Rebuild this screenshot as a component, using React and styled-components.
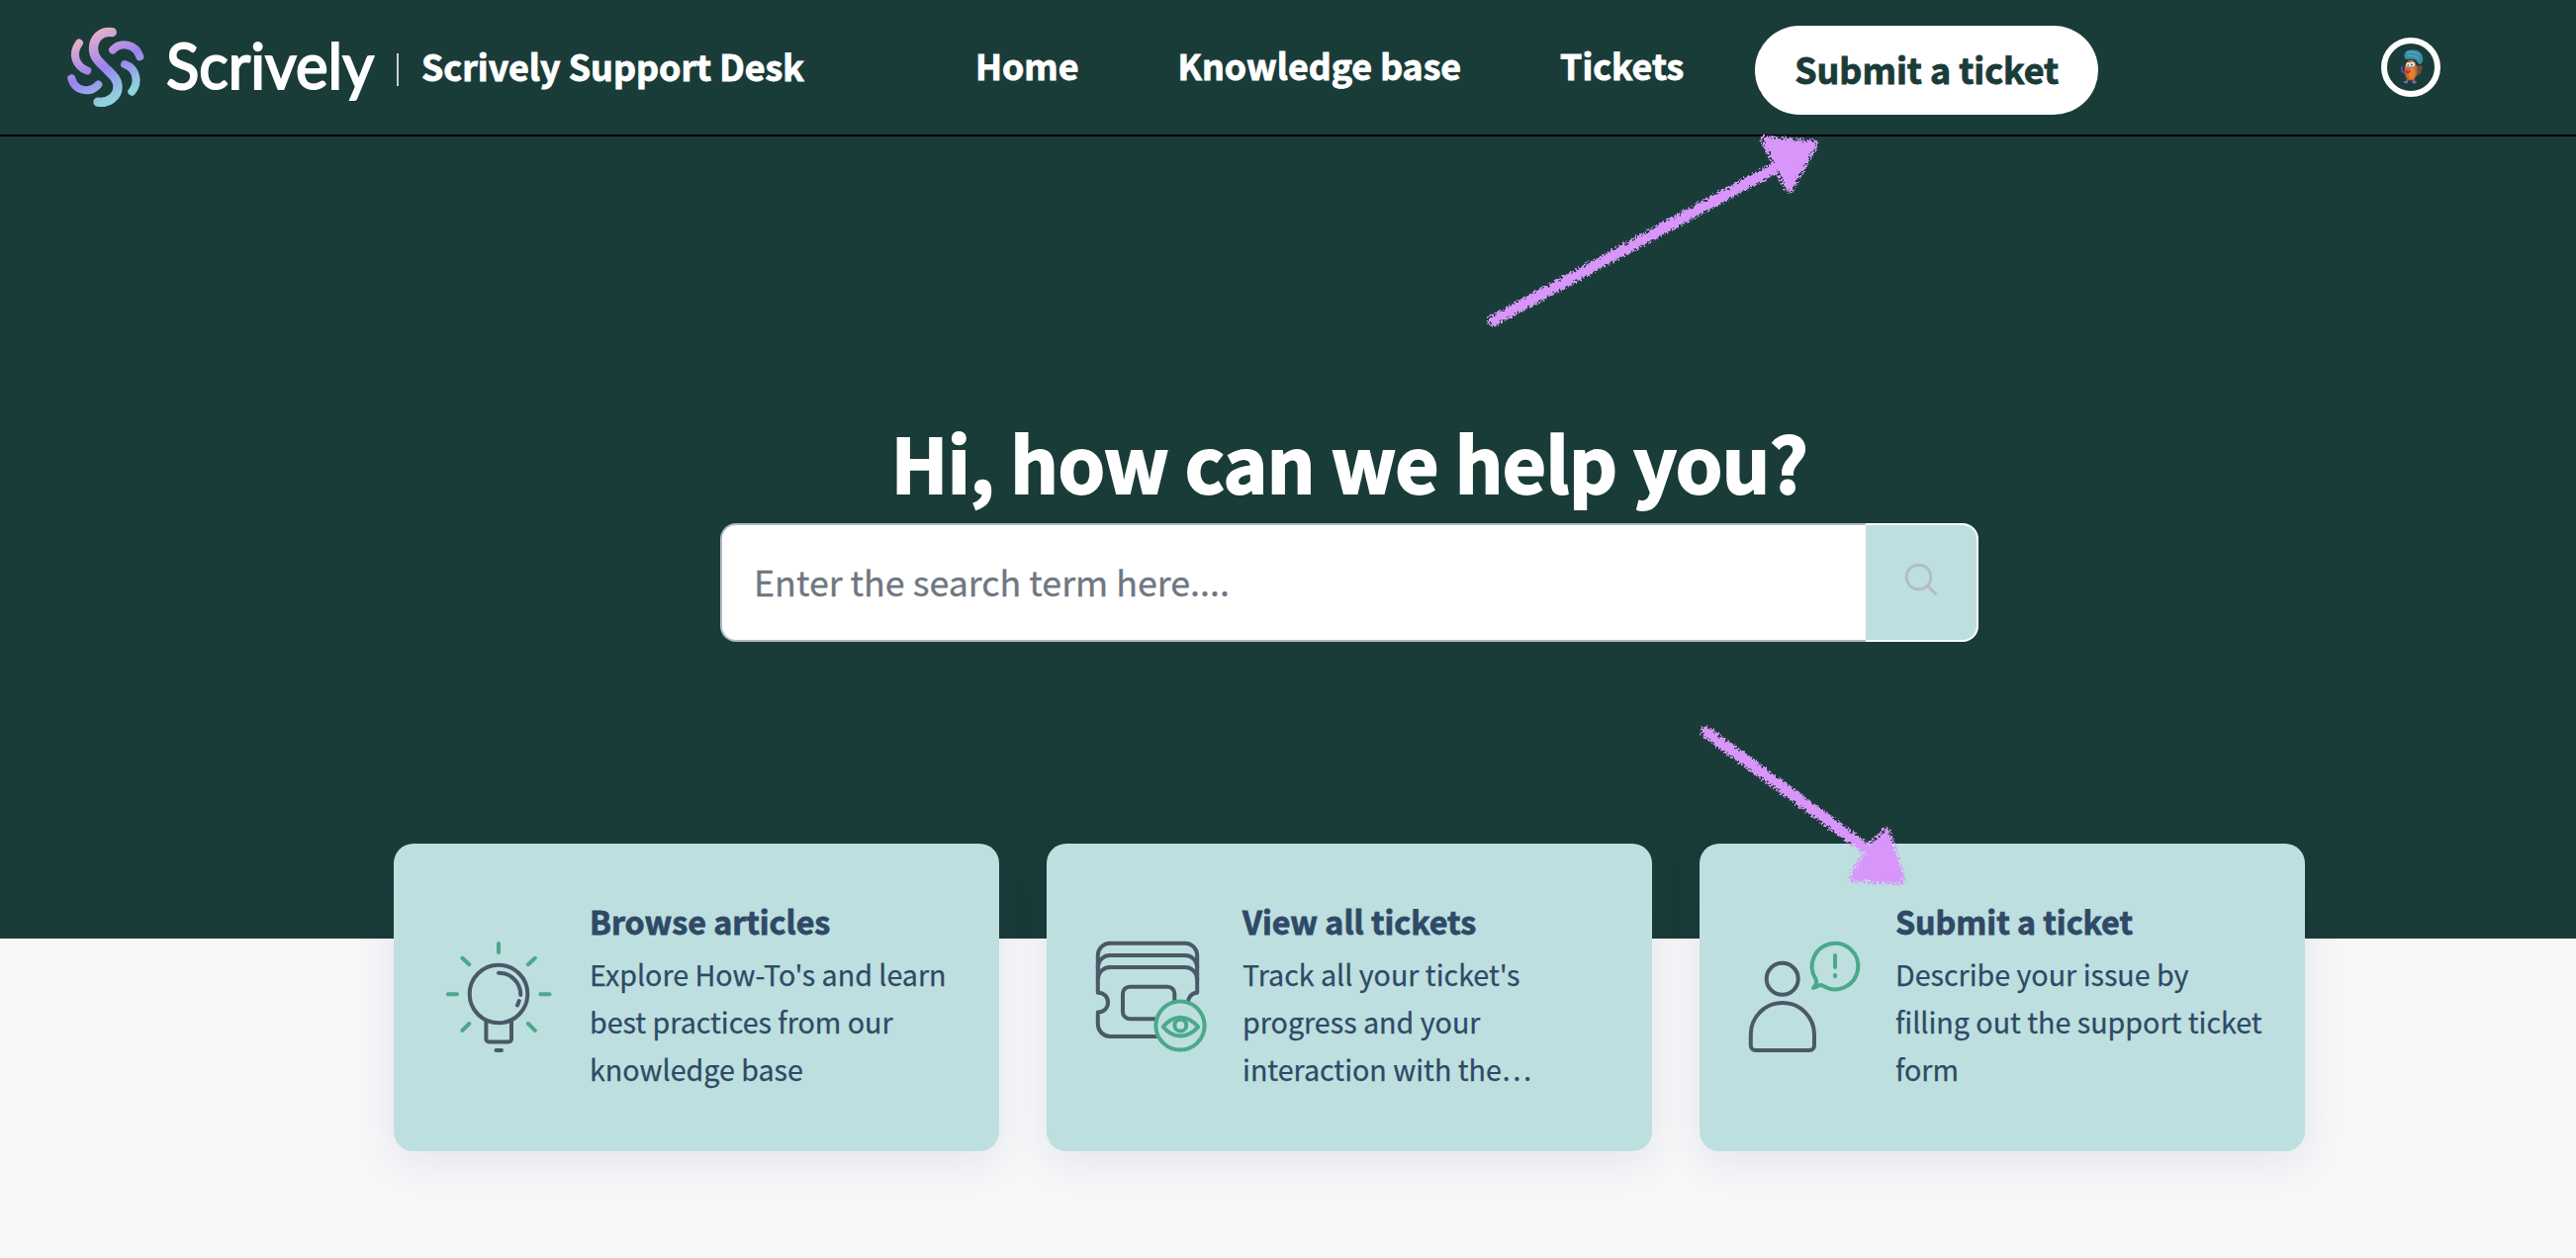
import React from "react";
import styled, { createGlobalStyle } from "styled-components";

const GlobalStyle = createGlobalStyle`
  * {
    box-sizing: border-box;
  }

  body {
    margin: 0;
    background-color: #f6f7f9;
    font-family: "Noto Sans CJK SC", "Open Sans", sans-serif;
  }
`;

const Page = styled.div`
  position: relative;
  min-height: 1272px;
  overflow: hidden;
`;

const Header = styled.header`
  display: flex;
  align-items: center;
  height: 138px;
  padding: 0 137px 0 68px;
  background-color: #1a3c39;
  border-bottom: 2px solid black;
`;

const Brand = styled.div`
  display: flex;
  align-items: center;
  flex: 0 0 918px;
`;

const Divider = styled.span`
  width: 2px;
  height: 33px;
  margin: 4px 0 0 21px;
  background-color: #cfcfcf;
`;

const PortalName = styled.span`
  margin: -4px 0 0 23px;
  font-size: 35.8px;
  font-weight: 700;
  line-height: 52px;
  white-space: nowrap;
  color: white;
  -webkit-text-stroke: 0.9px white;
`;

const Nav = styled.nav`
  display: flex;
  align-items: center;
  gap: 100px;
`;

const NavLink = styled.a`
  margin-top: -4px;
  font-size: 35.7px;
  font-weight: 700;
  line-height: 52px;
  white-space: nowrap;
  color: white;
  -webkit-text-stroke: 0.9px white;
`;

const TicketButton = styled.button`
  width: 347px;
  height: 90px;
  margin: 6px 0 0 72px;
  padding: 0 0 4px;
  border: none;
  border-radius: 45px;
  font-family: inherit;
  font-size: 35.8px;
  font-weight: 700;
  white-space: nowrap;
  color: #1a3c39;
  background-color: white;
  -webkit-text-stroke: 0.9px #1a3c39;
`;

const Avatar = styled.div`
  display: flex;
  width: 60px;
  height: 60px;
  margin-left: auto;
  border: 6px solid white;
  border-radius: 50%;
`;

const Hero = styled.section`
  display: flex;
  flex-direction: column;
  align-items: center;
  height: 811px;
  padding: 278px 0 0 124px;
  background-color: #1a3c39;
`;

const Title = styled.h1`
  margin: 0 0 13px;
  font-size: 76px;
  font-weight: 700;
  line-height: 100px;
  letter-spacing: -0.5px;
  white-space: nowrap;
  color: white;
  -webkit-text-stroke: 2px white;
`;

const SearchBar = styled.form`
  display: flex;
  width: 1272px;
  height: 120px;
`;

const SearchInput = styled.input`
  flex: 1;
  padding: 0 32px 5px;
  border: 2px solid #afbcc5;
  border-right: none;
  border-radius: 16px 0 0 16px;
  font-family: inherit;
  font-size: 35.8px;
  color: #264966;
  background-color: white;

  &::placeholder {
    color: #6f7780;
    opacity: 1;
    -webkit-text-stroke: 0.3px #6f7780;
  }
`;

const SearchButton = styled.button`
  display: flex;
  align-items: center;
  justify-content: center;
  width: 114px;
  padding: 0 0 6px;
  border: 2px solid white;
  border-left: none;
  border-radius: 0 16px 16px 0;
  background-color: #bddfdf;
`;

const Cards = styled.section`
  display: flex;
  justify-content: center;
  gap: 48px;
  margin-top: -96px;
  padding-left: 124px;
`;

const Card = styled.a`
  display: flex;
  align-items: center;
  width: 612px;
  height: 311px;
  padding: 0 36px 0 46px;
  border-radius: 20px;
  background-color: #bddfdf;
  box-shadow: 0 10px 40px rgba(24, 30, 51, 0.08);
`;

const CardText = styled.div`
  width: 376px;
  margin-left: 32px;
  padding-bottom: 6px;
  color: #2f4966;
`;

const CardTitle = styled.h2`
  margin: 0 0 6px;
  font-size: 32.2px;
  font-weight: 700;
  line-height: 48px;
  -webkit-text-stroke: 0.8px #2f4966;
`;

const CardDescription = styled.p`
  margin: 0;
  font-size: 28.65px;
  line-height: 48px;
  -webkit-text-stroke: 0.25px #2f4966;
`;

// proportional glyph keeps the dots on the baseline
const Ellipsis = styled.span`
  font-feature-settings: "pwid";
`;

const Arrow = styled.svg`
  position: absolute;
  left: ${(props) => props.$left}px;
  top: ${(props) => props.$top}px;
  overflow: visible;
  pointer-events: none;
`;

const LogoDrawing = styled.svg`
  overflow: visible;
`;

const Logo = () => (
  <LogoDrawing width="312" height="96" viewBox="0 0 312 96" fill="none">
    <defs>
      <linearGradient id="swirl" gradientUnits="userSpaceOnUse" x1="20" y1="5" x2="55" y2="76">
        <stop offset="0.05" stopColor="#e3afcb" />
        <stop offset="0.5" stopColor="#9c80f2" />
        <stop offset="0.9" stopColor="#8ed4dc" />
      </linearGradient>
    </defs>
    <g transform="translate(0 8)" stroke="url(#swirl)" strokeLinecap="round">
      <path
        strokeWidth="9.4"
        d="M45.3 4.6C34 3 26.5 11 26.5 21C26.5 30 32 34.5 38.7 41C46 48 51 52 51 60C51 70 41 76.5 31 75.2"
      />
      <path strokeWidth="8" d="M12 15.5C4.5 26 7.5 38.5 20.3 43.5" />
      <path strokeWidth="8" d="M4.3 51.3C8 64.5 23 67 31.3 57.5" />
      <path strokeWidth="8" d="M46 22.5C54 14 69 16 73.3 29.3" />
      <path strokeWidth="8" d="M58 37C70 41 73 55 65.3 64.7" />
    </g>
    <text
      x="100"
      y="69.5"
      fill="white"
      stroke="white"
      strokeWidth="2"
      fontFamily="Lato, sans-serif"
      fontSize="63"
      textLength="210"
      lengthAdjust="spacingAndGlyphs"
    >
      Scrively
    </text>
  </LogoDrawing>
);

const AvatarImage = () => (
  <svg width="48" height="48" viewBox="6 6 48 48">
    <path d="M34 28l8 1 -2 7 -5 4z" fill="#70503a" />
    <ellipse cx="30" cy="33" rx="6.4" ry="10.5" fill="#c9682f" />
    <ellipse cx="31" cy="36" rx="3.5" ry="6" fill="#dd8138" />
    <path d="M24 21c-2-6 2-9 8-8.5c6 0 10 3 10 8c1 3-1 7-4 6.5c-1-3-3-5-6-5c-3-1-5 1-8-1z" fill="#3a8ca8" />
    <path d="M26 15.5c4-2 9-1 12 2M27 18.5c4-1 8 0 11 3" stroke="#62b4c9" fill="none" />
    <circle cx="27.5" cy="27.5" r="2.3" fill="#e8f4f6" />
    <circle cx="31.5" cy="27" r="2.6" fill="#d4edf2" />
    <circle cx="27.3" cy="28" r="0.9" fill="#2b6f8c" />
    <circle cx="31" cy="27.5" r="1" fill="#2b6f8c" />
    <path d="M24.5 33c2 1 4 1 5.5 0c0 3-4 4.5-5.5 2z" fill="#c4243c" />
    <path d="M21 29v5l3 2" stroke="#5a4fae" strokeWidth="1.8" fill="none" />
    <path d="M27 42l-1 2M33 42v2" stroke="#b5612e" strokeWidth="2" />
    <ellipse cx="25" cy="45" rx="2.4" ry="1.2" fill="#6f67b8" />
    <ellipse cx="33.5" cy="45" rx="2.4" ry="1.5" fill="#6f67b8" />
  </svg>
);

const SearchIcon = () => (
  <svg width="34" height="34" viewBox="0 0 34 34" fill="none" stroke="#b4bbc9" strokeWidth="3" strokeLinecap="round">
    <circle cx="14.5" cy="14.5" r="12.3" />
    <path d="M23.5 23.5L31.5 31.5" />
  </svg>
);

const CardIcon = ({ children }) => (
  <svg
    width="120"
    height="120"
    viewBox="0 0 120 120"
    fill="none"
    stroke="#4b5867"
    strokeWidth="4"
    strokeLinecap="round"
    strokeLinejoin="round"
  >
    {children}
  </svg>
);

const BulbIcon = () => (
  <CardIcon>
    <circle cx="60" cy="56" r="29.3" />
    <path d="M60 34.7C72 34.7 82.3 44 82.3 57M80.8 63L79 67.5" />
    <path d="M47.4 83V101.500a3 3 0 0 0 3 3H70a3 3 0 0 0 3-3V83M57.5 113H63" />
    <path
      stroke="#4aa88b"
      d="M60 5V14M8.8 56.3H18M102.3 56.3H111.5M23.4 19.8L30.3 26.2M96.8 19.8L89.9 26.2M30.3 86L23.4 92.8M89.9 86L96.8 92.8"
    />
  </CardIcon>
);

const TicketIcon = () => (
  <CardIcon>
    <path
      d="M5.8 54.7V17A12.3 12.3 0 0 1 18 4.7H94A12.3 12.3 0 0 1 106.2 17V54.7C100.5 55 97 59.5 97 64.5"
      strokeLinecap="butt"
    />
    <path d="M5.8 29.5A12.3 12.3 0 0 1 18 17H94A12.3 12.3 0 0 1 106.2 29.5" />
    <path d="M5.8 41.5A12.3 12.3 0 0 1 18 29H94A12.3 12.3 0 0 1 106.2 41.5" />
    <path d="M5.8 54.7C12 54.7 16 59 16 64.5S12 74.5 5.8 74.5V86.5A12.5 12.5 0 0 0 18 99H68" />
    <rect x="31" y="48.7" width="52.3" height="32.5" rx="7" />
    <circle cx="89" cy="88" r="24.6" fill="#bddfdf" stroke="#4aa88b" />
    <path stroke="#4aa88b" d="M71.8 89.3C82 76.5 96 76.5 107.2 89.3C96 101.5 82 101.5 71.8 89.3Z" />
    <circle cx="89.3" cy="87.7" r="5.9" stroke="#4aa88b" />
  </CardIcon>
);

const PersonIcon = () => (
  <CardIcon>
    <circle cx="37.7" cy="40.8" r="16" />
    <path d="M5.8 97A32.1 32.1 0 0 1 70 97V108a5 5 0 0 1-5 5H10.8a5 5 0 0 1-5-5Z" />
    <path
      stroke="#4aa88b"
      d="M71.3 40.5A23.3 23.3 0 1 1 79.5 48.3C77.5 46.5 76 46.5 74 48L69 50C72 47 73 44 71.3 40.5Z"
    />
    <path stroke="#4aa88b" d="M91 17V29M91 37V38.3" />
  </CardIcon>
);

const cards = [
  {
    title: "Browse articles",
    text: "Explore How-To's and learn best practices from our knowledge base",
    Icon: BulbIcon,
  },
  {
    title: "View all tickets",
    text: "Track all your ticket's progress and your interaction with the",
    truncated: true,
    Icon: TicketIcon,
  },
  {
    title: "Submit a ticket",
    text: "Describe your issue by filling out the support ticket form",
    Icon: PersonIcon,
  },
];

// crayon arrow: a rough solid core with a speckled edge around it
const CrayonArrow = ({ id, left, top, width, height, line, head }) => (
  <Arrow $left={left} $top={top} width={width} height={height} viewBox={`0 0 ${width} ${height}`}>
    <defs>
      <filter id={`${id}-core`} filterUnits="userSpaceOnUse" x="-20" y="-20" width={width + 40} height={height + 40}>
        <feTurbulence type="fractalNoise" baseFrequency="0.25" numOctaves="2" seed="4" />
        <feDisplacementMap in="SourceGraphic" scale="7" xChannelSelector="R" yChannelSelector="G" />
      </filter>
      <filter id={`${id}-edge`} filterUnits="userSpaceOnUse" x="-20" y="-20" width={width + 40} height={height + 40}>
        <feTurbulence type="fractalNoise" baseFrequency="0.45" numOctaves="2" seed="9" result="noise" />
        <feColorMatrix
          in="noise"
          type="matrix"
          values="0 0 0 0 0  0 0 0 0 0  0 0 0 0 0  12 0 0 0 -5.3"
          result="specks"
        />
        <feDisplacementMap
          in="SourceGraphic"
          in2="noise"
          scale="5"
          xChannelSelector="R"
          yChannelSelector="G"
          result="rough"
        />
        <feComposite in="rough" in2="specks" operator="in" />
      </filter>
    </defs>
    <g fill="none" stroke="#d896fa" strokeLinecap="round" strokeLinejoin="round">
      <g filter={`url(#${id}-edge)`}>
        <path d={line} strokeWidth="13" />
        <path d={head} strokeWidth="11" fill="#d896fa" />
      </g>
      <g filter={`url(#${id}-core)`}>
        <path d={line} strokeWidth="8.5" />
        <path d={head} strokeWidth="4" fill="#d896fa" />
      </g>
    </g>
  </Arrow>
);

const App = () => {
  return (
    <Page>
      <GlobalStyle />
      <Header>
        <Brand>
          <Logo />
          <Divider />
          <PortalName>Scrively Support Desk</PortalName>
        </Brand>
        <Nav>
          <NavLink>Home</NavLink>
          <NavLink>Knowledge base</NavLink>
          <NavLink>Tickets</NavLink>
        </Nav>
        <TicketButton>Submit a ticket</TicketButton>
        <Avatar>
          <AvatarImage />
        </Avatar>
      </Header>
      <Hero>
        <Title>Hi, how can we help you?</Title>
        <SearchBar>
          <SearchInput placeholder="Enter the search term here...." />
          <SearchButton type="button">
            <SearchIcon />
          </SearchButton>
        </SearchBar>
      </Hero>
      <Cards>
        {cards.map(({ title, text, truncated, Icon }) => (
          <Card key={title}>
            <Icon />
            <CardText>
              <CardTitle>{title}</CardTitle>
              <CardDescription>
                {text}
                {truncated ? <Ellipsis>…</Ellipsis> : <></>}
              </CardDescription>
            </CardText>
          </Card>
        ))}
      </Cards>
      <CrayonArrow
        id="header-arrow"
        left={1500}
        top={138}
        width={340}
        height={194}
        line="M10 186L298 30"
        head="M285 4L333 8L309 52Z"
      />
      <CrayonArrow
        id="card-arrow"
        left={1720}
        top={732}
        width={206}
        height={166}
        line="M5 8L165 125"
        head="M187 110L202 158L154 155L167 132L173 124Z"
      />
    </Page>
  );
};

export default App;
